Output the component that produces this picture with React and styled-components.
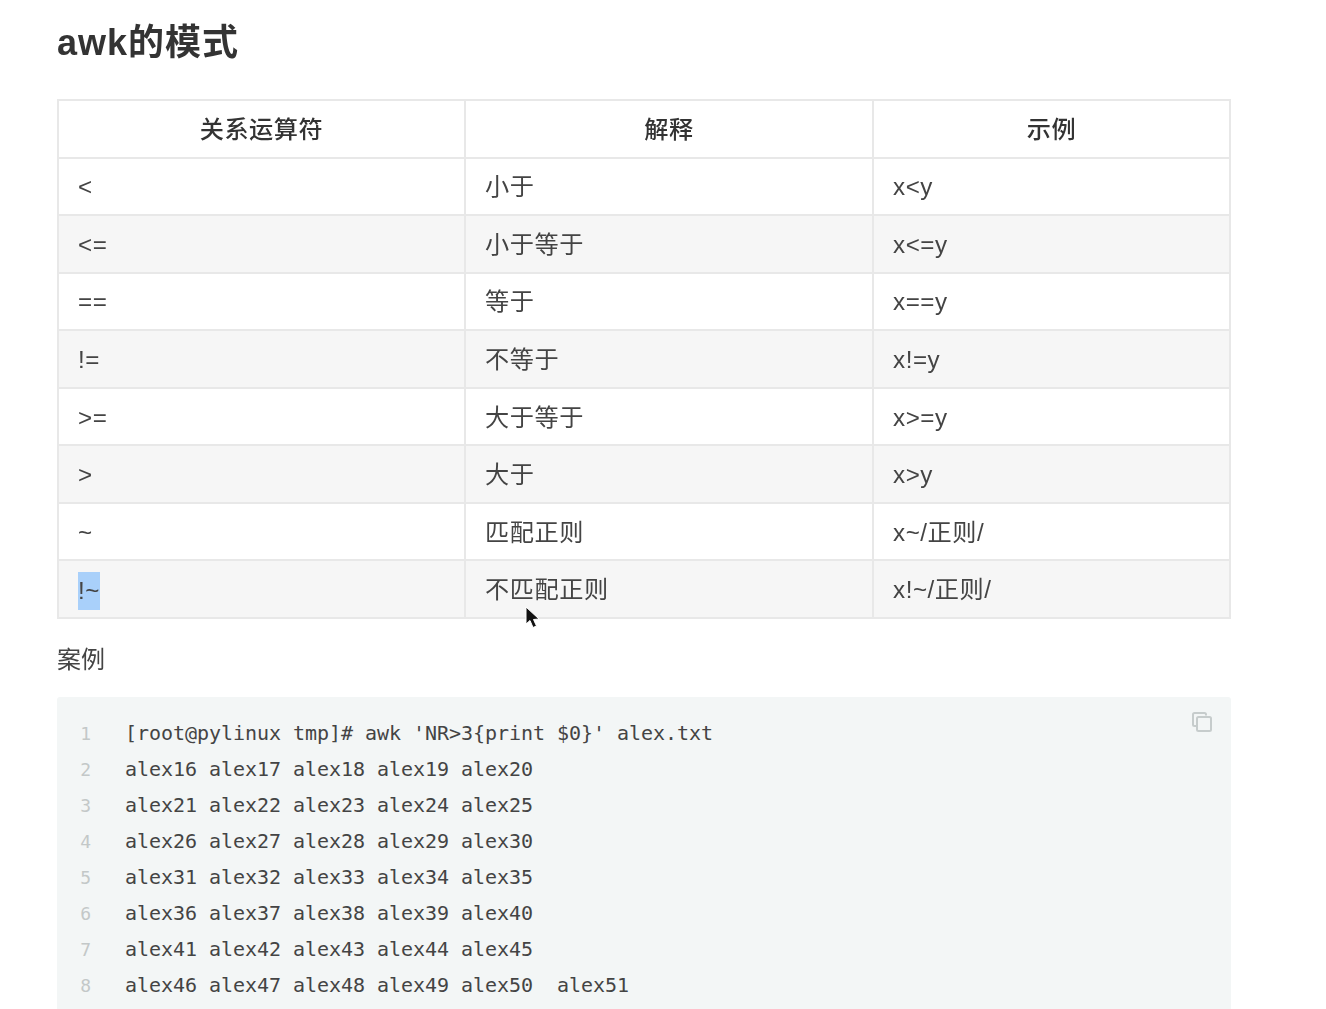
import React from "react";
import styled, { createGlobalStyle } from "styled-components";

const Global = createGlobalStyle`
  html, body { margin: 0; padding: 0; height: 1009px; overflow: hidden; background: #fff; }
  #root { height: 1009px; overflow: hidden; }
`;

const Page = styled.main`
  position: relative;
  width: 1174px;
  padding: 0 0 0 57px;
  color: #333;
  font-family: "Liberation Sans", "Noto Sans CJK SC", sans-serif;
  filter: blur(0.45px);
`;

const Title = styled.h2`
  margin: 0;
  height: 99px;
  padding-top: 20px;
  box-sizing: border-box;
  font-size: 36px;
  line-height: 46px;
  font-weight: 700;
  color: #333;
  letter-spacing: 1px;
`;

const Table = styled.table`
  width: 1174px;
  height: 520px;
  table-layout: fixed;
  border-collapse: separate;
  border-spacing: 0;
  border-top: 2px solid #e8e8e8;
  border-left: 2px solid #e8e8e8;
  box-sizing: border-box;
  font-size: 24.2px;
  letter-spacing: 0.55px;
`;

const Row = styled.tr`
  height: 57.55px;
  background: ${(p) => (p.$shaded ? "#f6f6f6" : "#fff")};
`;

const Head = styled.th`
  width: ${(p) => p.$width}px;
  box-sizing: border-box;
  border-right: 2px solid #e8e8e8;
  border-bottom: 2px solid #e8e8e8;
  padding: 0 0 2px;
  text-align: center;
  font-weight: 500;
  color: #333;
`;

const Cell = styled.td`
  position: relative;
  box-sizing: border-box;
  border-right: 2px solid #e8e8e8;
  border-bottom: 2px solid #e8e8e8;
  padding: 2px 0 0 19px;
  color: #444;
  line-height: 38px;
`;

const Selected = styled.span`
  display: inline-block;
  background: #a9d0fa;
  height: 38px;
  line-height: 38px;
  vertical-align: middle;
`;

const Pointer = styled.svg`
  position: absolute;
  left: 524px;
  top: 605px;
  width: 18px;
  height: 27px;
`;

const Para = styled.p`
  margin: 0;
  height: 78px;
  padding-top: 22px;
  box-sizing: border-box;
  font-size: 24px;
  line-height: 38px;
  color: #444;
`;

const CodeBlock = styled.section`
  position: relative;
  width: 1174px;
  height: 340px;
  padding-top: 18px;
  box-sizing: border-box;
  background: #f3f6f6;
  border-radius: 3px;
`;

const CopyIcon = styled.svg`
  position: absolute;
  right: 18px;
  top: 14px;
  width: 22px;
  height: 22px;
`;

const CodeLine = styled.div`
  display: grid;
  grid-template-columns: 68px 1fr;
  height: 36px;
  line-height: 36px;
  font-family: "DejaVu Sans Mono", "Liberation Mono", monospace;
`;

const LineNo = styled.span`
  text-align: right;
  padding: 1px 34px 0 0;
  font-size: 18px;
  color: #c3c8c8;
  box-sizing: border-box;
`;

const CodeText = styled.span`
  font-size: 20px;
  letter-spacing: -0.04px;
  color: #444;
  white-space: pre;
`;

const rows = [
  ["<", "小于", "x<y"],
  ["<=", "小于等于", "x<=y"],
  ["==", "等于", "x==y"],
  ["!=", "不等于", "x!=y"],
  [">=", "大于等于", "x>=y"],
  [">", "大于", "x>y"],
  ["~", "匹配正则", "x~/正则/"],
  ["!~", "不匹配正则", "x!~/正则/"],
];

const code = [
  "[root@pylinux tmp]# awk 'NR>3{print $0}' alex.txt",
  "alex16 alex17 alex18 alex19 alex20",
  "alex21 alex22 alex23 alex24 alex25",
  "alex26 alex27 alex28 alex29 alex30",
  "alex31 alex32 alex33 alex34 alex35",
  "alex36 alex37 alex38 alex39 alex40",
  "alex41 alex42 alex43 alex44 alex45",
  "alex46 alex47 alex48 alex49 alex50  alex51",
];

export default function App() {
  return (
    <Page>
      <Global />
      <Title>awk的模式</Title>
      <Table>
        <thead>
          <Row>
            <Head $width={407}>关系运算符</Head>
            <Head $width={408}>解释</Head>
            <Head $width={357}>示例</Head>
          </Row>
        </thead>
        <tbody>
          {rows.map((r, i) => (
            <Row key={r[0]} $shaded={i % 2 === 1}>
              <Cell>{i === 7 ? <Selected>{r[0]}</Selected> : r[0]}</Cell>
              <Cell>{r[1]}</Cell>
              <Cell>{r[2]}</Cell>
            </Row>
          ))}
        </tbody>
      </Table>
      <Pointer viewBox="0 0 18 27">
        <path d="M2 2 L2 19 L6 15.5 L9 22.5 L12.5 21 L9.5 14.5 L15 14 Z" fill="#111" stroke="#fff" strokeWidth="1" />
      </Pointer>
      <Para>案例</Para>
      <CodeBlock>
        <CopyIcon viewBox="0 0 22 22" fill="none" stroke="#c6cccc" strokeWidth="2">
          <path d="M15 4.5 V3.5 A1.5 1.5 0 0 0 13.5 2 H3.5 A1.5 1.5 0 0 0 2 3.5 V13.5 A1.5 1.5 0 0 0 3.5 15 H5" />
          <rect x="6" y="6" width="14" height="14" rx="1.5" />
        </CopyIcon>
        {code.map((c, i) => (
          <CodeLine key={c}>
            <LineNo>{i + 1}</LineNo>
            <CodeText>{c}</CodeText>
          </CodeLine>
        ))}
      </CodeBlock>
    </Page>
  );
}
